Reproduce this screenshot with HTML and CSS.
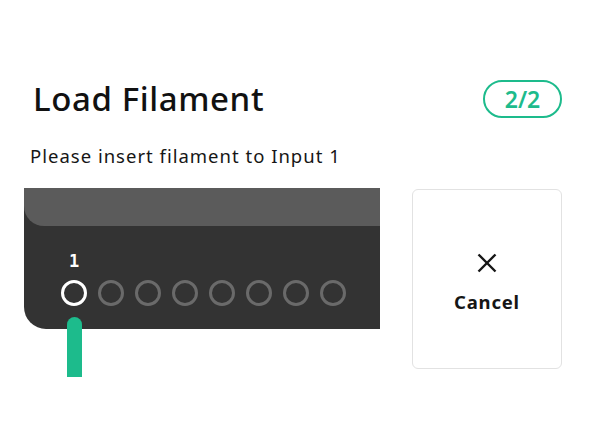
FILE: index.html
```html
<!DOCTYPE html>
<html>
<head>
<meta charset="utf-8">
<link rel="stylesheet" href="styles.css">
</head>
<body>
<div class="screen">
  <div class="header">
    <h1 class="title">Load Filament</h1>
    <div class="badge">2/2</div>
  </div>
  <p class="subtitle">Please insert filament to Input 1</p>
  <div class="content">
    <div class="visual">
      <div class="panel">
        <div class="panel-top"></div>
        <div class="panel-body">
          <div class="label">1</div>
          <div class="ports">
            <span class="port active"></span>
            <span class="port"></span>
            <span class="port"></span>
            <span class="port"></span>
            <span class="port"></span>
            <span class="port"></span>
            <span class="port"></span>
            <span class="port"></span>
          </div>
        </div>
      </div>
      <div class="filament"></div>
    </div>
    <button class="cancel">
      <svg class="x" width="20" height="20" viewBox="0 0 20 20"><path d="M1.5 1.5 L18.5 18.5 M18.5 1.5 L1.5 18.5" stroke="#161616" stroke-width="2.4" fill="none"/></svg>
      <span>Cancel</span>
    </button>
  </div>
</div>
</body>
</html>
```
FILE: styles.css
```css
html, body { margin: 0; padding: 0; background: #fff; }
body { font-family: "Noto Sans", "Open Sans", sans-serif; color: #111; width: 592px; height: 444px; overflow: hidden; }
.screen { padding: 79px 30px 0 24px; }
.header { display: flex; justify-content: space-between; align-items: center; padding-left: 9px; }
.title { margin: 0; font-size: 33px; font-weight: 500; letter-spacing: 0.6px; line-height: 40px; color: #111; }
.badge { width: 75px; height: 34px; border: 2px solid #1dbb8c; border-radius: 20px; color: #1dbb8c; font-size: 23px; font-weight: 600; display: flex; align-items: center; justify-content: center; }
.subtitle { margin: 23px 0 0 6px; font-size: 18.5px; letter-spacing: 1px; line-height: 28px; color: #161616; }
.content { display: flex; margin-top: 18px; align-items: flex-start; }
.visual { width: 356px; }
.panel { background: #333333; border-radius: 0 0 0 22px; height: 141px; overflow: hidden; }
.panel-top { height: 38px; background: #5b5b5b; border-radius: 0 0 0 20px; }
.panel-body { padding: 24px 0 0 37px; }
.label { width: 26px; text-align: center; color: #fff; font-family: "DejaVu Sans Mono", monospace; font-weight: 600; font-size: 17px; line-height: 22px; }
.ports { display: flex; gap: 11px; margin-top: 8px; }
.port { width: 20px; height: 20px; border: 3px solid #6a6a6a; border-radius: 50%; display: block; }
.port.active { border-color: #fff; }
.filament { width: 15px; height: 60px; background: #1dbb8c; border-radius: 8px 8px 0 0; margin: -12px 0 0 43px; position: relative; }
.cancel { margin-left: 32px; margin-top: 1px; width: 150px; height: 180px; background: #fff; border: 1px solid #e2e2e2; border-radius: 6px; display: flex; flex-direction: column; align-items: center; justify-content: center; font-family: inherit; font-size: 18.5px; letter-spacing: 0.8px; font-weight: 700; color: #161616; padding: 8px 0 0 0; gap: 16px; }
.x { display: block; }
```
